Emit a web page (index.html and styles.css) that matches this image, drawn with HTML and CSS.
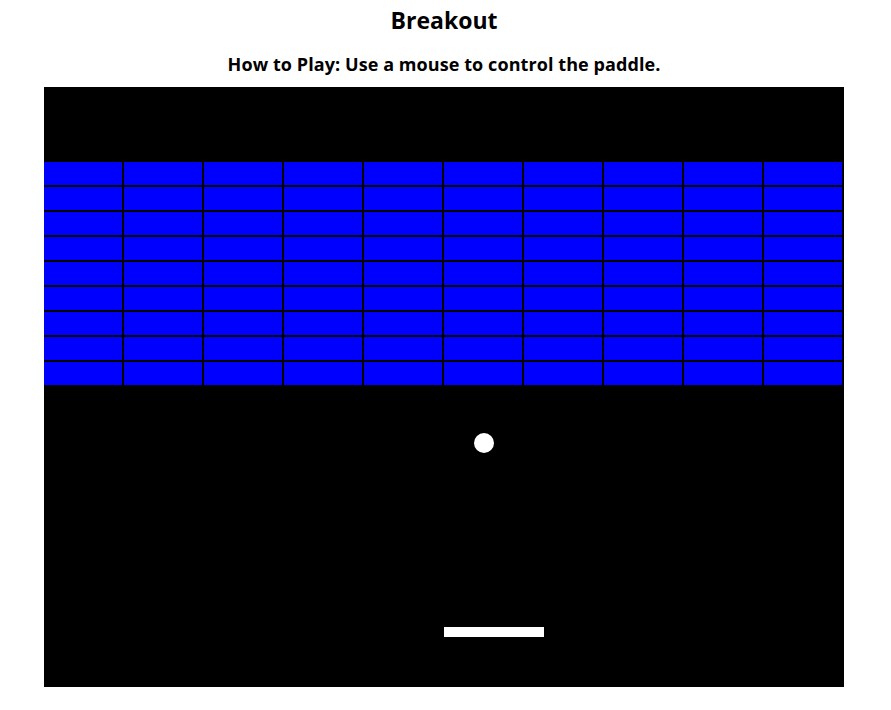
FILE: index.html
```html
<!DOCTYPE html>
<html lang="en">
<head>
<meta charset="utf-8">
<title>Breakout</title>
<link rel="stylesheet" href="styles.css">
</head>
<body>
<main class="page">
  <h1 class="title">Breakout</h1>
  <h2 class="subtitle">How to Play: Use a mouse to control the paddle.</h2>
  <div class="board">
    <div class="bricks">
      <div class="brick"></div><div class="brick"></div><div class="brick"></div><div class="brick"></div><div class="brick"></div><div class="brick"></div><div class="brick"></div><div class="brick"></div><div class="brick"></div><div class="brick"></div>
      <div class="brick"></div><div class="brick"></div><div class="brick"></div><div class="brick"></div><div class="brick"></div><div class="brick"></div><div class="brick"></div><div class="brick"></div><div class="brick"></div><div class="brick"></div>
      <div class="brick"></div><div class="brick"></div><div class="brick"></div><div class="brick"></div><div class="brick"></div><div class="brick"></div><div class="brick"></div><div class="brick"></div><div class="brick"></div><div class="brick"></div>
      <div class="brick"></div><div class="brick"></div><div class="brick"></div><div class="brick"></div><div class="brick"></div><div class="brick"></div><div class="brick"></div><div class="brick"></div><div class="brick"></div><div class="brick"></div>
      <div class="brick"></div><div class="brick"></div><div class="brick"></div><div class="brick"></div><div class="brick"></div><div class="brick"></div><div class="brick"></div><div class="brick"></div><div class="brick"></div><div class="brick"></div>
      <div class="brick"></div><div class="brick"></div><div class="brick"></div><div class="brick"></div><div class="brick"></div><div class="brick"></div><div class="brick"></div><div class="brick"></div><div class="brick"></div><div class="brick"></div>
      <div class="brick"></div><div class="brick"></div><div class="brick"></div><div class="brick"></div><div class="brick"></div><div class="brick"></div><div class="brick"></div><div class="brick"></div><div class="brick"></div><div class="brick"></div>
      <div class="brick"></div><div class="brick"></div><div class="brick"></div><div class="brick"></div><div class="brick"></div><div class="brick"></div><div class="brick"></div><div class="brick"></div><div class="brick"></div><div class="brick"></div>
      <div class="brick"></div><div class="brick"></div><div class="brick"></div><div class="brick"></div><div class="brick"></div><div class="brick"></div><div class="brick"></div><div class="brick"></div><div class="brick"></div><div class="brick"></div>
    </div>
    <div class="ball"></div>
    <div class="paddle"></div>
  </div>
</main>
</body>
</html>
```

FILE: styles.css
```css
html, body {
  margin: 0;
  padding: 0;
  background: #ffffff;
}

.page {
  width: 888px;
  padding-top: 7px;
  display: flex;
  flex-direction: column;
  align-items: center;
  font-family: "Open Sans", Lato, sans-serif;
  color: #000000;
}

.title {
  margin: 0;
  font-size: 23px;
  line-height: 26px;
  font-weight: 700;
}

.subtitle {
  margin: 20px 0 0;
  font-size: 18px;
  line-height: 22px;
  font-weight: 700;
  letter-spacing: 0.08px;
}

.board {
  position: relative;
  margin-top: 12px;
  width: 800px;
  height: 600px;
  background: #000000;
}

.bricks {
  padding-top: 75px;
  display: grid;
  grid-template-columns: repeat(10, 78px);
  grid-auto-rows: 23px;
  gap: 2px;
}

.brick {
  background: #0000ff;
}

.ball {
  position: absolute;
  left: 430px;
  top: 346px;
  width: 20px;
  height: 20px;
  border-radius: 50%;
  background: #ffffff;
}

.paddle {
  position: absolute;
  left: 400px;
  top: 540px;
  width: 100px;
  height: 10px;
  background: #ffffff;
}
```
